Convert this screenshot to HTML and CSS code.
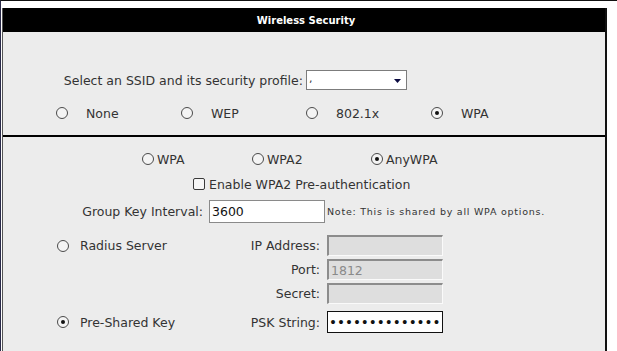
FILE: index.html
```html
<!DOCTYPE html>
<html lang="en">
<head>
    <meta charset="UTF-8">
    <title>Wireless Security</title>
    <link rel="stylesheet" href="styles.css">
</head>
<body>
    <div class="frame">
        <div class="panel-header">Wireless Security</div>

        <div class="profile">
            <div class="ssid-row">
                <label class="ssid-label">Select an SSID and its security profile:</label>
                <div class="select-box">
                    <span class="select-value">,</span>
                    <svg class="select-arrow" width="7" height="4" viewBox="0 0 7 4"><path d="M0 0H7L3.5 4Z" fill="#0a0a40"/></svg>
                </div>
            </div>
            <div class="mode-row">
                <label class="mode"><input type="radio" name="mode" class="radio"><span class="mode-text">None</span></label>
                <label class="mode"><input type="radio" name="mode" class="radio"><span class="mode-text">WEP</span></label>
                <label class="mode"><input type="radio" name="mode" class="radio"><span class="mode-text">802.1x</span></label>
                <label class="mode"><input type="radio" name="mode" class="radio" checked><span class="mode-text">WPA</span></label>
            </div>
        </div>

        <div class="wpa">
            <div class="wpa-types">
                <label class="wpa-type"><input type="radio" name="wpa" class="radio">WPA</label>
                <label class="wpa-type wpa-type-2"><input type="radio" name="wpa" class="radio">WPA2</label>
                <label class="wpa-type"><input type="radio" name="wpa" class="radio" checked>AnyWPA</label>
            </div>
            <div class="preauth-row">
                <label class="preauth"><input type="checkbox" class="checkbox">Enable WPA2 Pre-authentication</label>
            </div>
            <div class="interval-row">
                <label class="interval-label">Group Key Interval:</label>
                <input type="text" class="text-input interval-input" value="3600">
                <span class="note">Note: This is shared by all WPA options.</span>
            </div>

            <div class="server-row">
                <label class="server-choice"><input type="radio" name="auth" class="radio">Radius Server</label>
                <span class="server-label">IP Address:</span>
                <input type="text" class="text-input disabled-input" disabled>
            </div>
            <div class="server-row">
                <span class="server-choice"></span>
                <span class="server-label">Port:</span>
                <input type="text" class="text-input disabled-input" value="1812" disabled>
            </div>
            <div class="server-row">
                <span class="server-choice"></span>
                <span class="server-label">Secret:</span>
                <input type="text" class="text-input disabled-input" disabled>
            </div>
            <div class="server-row psk-row">
                <label class="server-choice"><input type="radio" name="auth" class="radio" checked>Pre-Shared Key</label>
                <span class="server-label">PSK String:</span>
                <input type="password" class="text-input psk-input" value="abcdefghijklmno">
            </div>
        </div>
    </div>
</body>
</html>
```

FILE: styles.css
```css
* {
    box-sizing: border-box;
    margin: 0;
    padding: 0;
}

body {
    font-family: "DejaVu Sans", sans-serif;
    font-size: 12.5px;
    color: #333;
    background: #fff;
    border-top: 1px solid #111;
    border-left: 1px solid #2a2a48;
    height: 351px;
    overflow: hidden;
}

.frame {
    width: 605px;
    margin: 7px 0 0 1px;
    height: 400px;
    background: #ececec;
    border-left: 1px solid #555;
    border-right: 2px solid #111;
}

.panel-header {
    height: 24px;
    line-height: 25px;
    background: #000;
    color: #fff;
    font-weight: bold;
    font-size: 10px;
    text-align: center;
    padding-left: 4px;
}

/* SSID + security mode */
.profile {
    padding-top: 38px;
    border-bottom: 2px solid #000;
    padding-bottom: 12px;
}

.ssid-row {
    display: flex;
    align-items: center;
    height: 20px;
}

.ssid-label {
    width: 300px;
    text-align: right;
    white-space: nowrap;
}

.select-box {
    position: relative;
    width: 101px;
    height: 20px;
    margin-left: 3px;
    background: #fff;
    border: 1px solid #7c7c7c;
}

.select-value {
    position: absolute;
    left: 2px;
    top: 1px;
    font-size: 11px;
}

.select-arrow {
    position: absolute;
    right: 5px;
    top: 8px;
}

.mode-row {
    display: flex;
    height: 20px;
    margin-top: 13px;
    padding-left: 53px;
    align-items: center;
}

.mode {
    width: 125px;
    display: flex;
    align-items: center;
}

.mode-text {
    margin-left: 18px;
}

/* radios and checkbox */
.radio {
    appearance: none;
    -webkit-appearance: none;
    width: 12px;
    height: 12px;
    border: 1px solid #4a4a4a;
    border-radius: 50%;
    background: #f4f4f4;
    display: inline-grid;
    place-content: center;
    flex-shrink: 0;
}

.radio:checked::before {
    content: '';
    width: 4px;
    height: 4px;
    border-radius: 50%;
    background: #111;
}

.checkbox {
    appearance: none;
    -webkit-appearance: none;
    width: 12px;
    height: 12px;
    border: 1px solid #3a3a3a;
    border-radius: 2px;
    background: #f6f6f6;
    flex-shrink: 0;
}

/* WPA settings */
.wpa-types {
    display: flex;
    align-items: center;
    height: 20px;
    margin-top: 12px;
    padding-left: 139px;
}

.wpa-type {
    display: flex;
    align-items: center;
    gap: 3px;
    width: 110px;
}

.wpa-type-2 {
    width: 119px;
}

.preauth-row {
    height: 20px;
    margin-top: 5px;
    padding-left: 190px;
    display: flex;
    align-items: center;
}

.preauth {
    display: flex;
    align-items: center;
    gap: 4px;
}

.interval-row {
    display: flex;
    align-items: center;
    margin-top: 6px;
    height: 23px;
}

.interval-label {
    width: 200px;
    text-align: right;
}

.text-input {
    width: 116px;
    font-family: "DejaVu Sans", sans-serif;
    font-size: 12.5px;
    color: #111;
    padding: 0 2px;
    outline: none;
}

.interval-input {
    height: 23px;
    margin-left: 6px;
    background: #fff;
    border: 1px solid #8a8a8a;
}

.note {
    margin-left: 2px;
    font-family: "DejaVu Sans", sans-serif;
    font-size: 9.5px;
    letter-spacing: 0.75px;
    color: #333;
    white-space: nowrap;
}

.server-row {
    display: flex;
    align-items: center;
    height: 21px;
    margin-top: 3px;
}

.interval-row + .server-row {
    margin-top: 12px;
}

.server-choice {
    width: 200px;
    padding-left: 54px;
    display: flex;
    align-items: center;
    gap: 11px;
}

.server-label {
    width: 117px;
    text-align: right;
}

.disabled-input {
    height: 21px;
    margin-left: 7px;
    background: #dedede;
    color: #8a8a8a;
    border-style: solid;
    border-width: 2px 1px 1px 2px;
    border-color: #8c8c8c #fafafa #fafafa #8c8c8c;
}

.psk-row {
    height: 22px;
    margin-top: 7px;
}

.psk-input {
    height: 22px;
    margin-left: 7px;
    padding: 0 1px;
    background: #fff;
    border: 1px solid #111;
    font-size: 13.5px;
    letter-spacing: 0;
}
```
